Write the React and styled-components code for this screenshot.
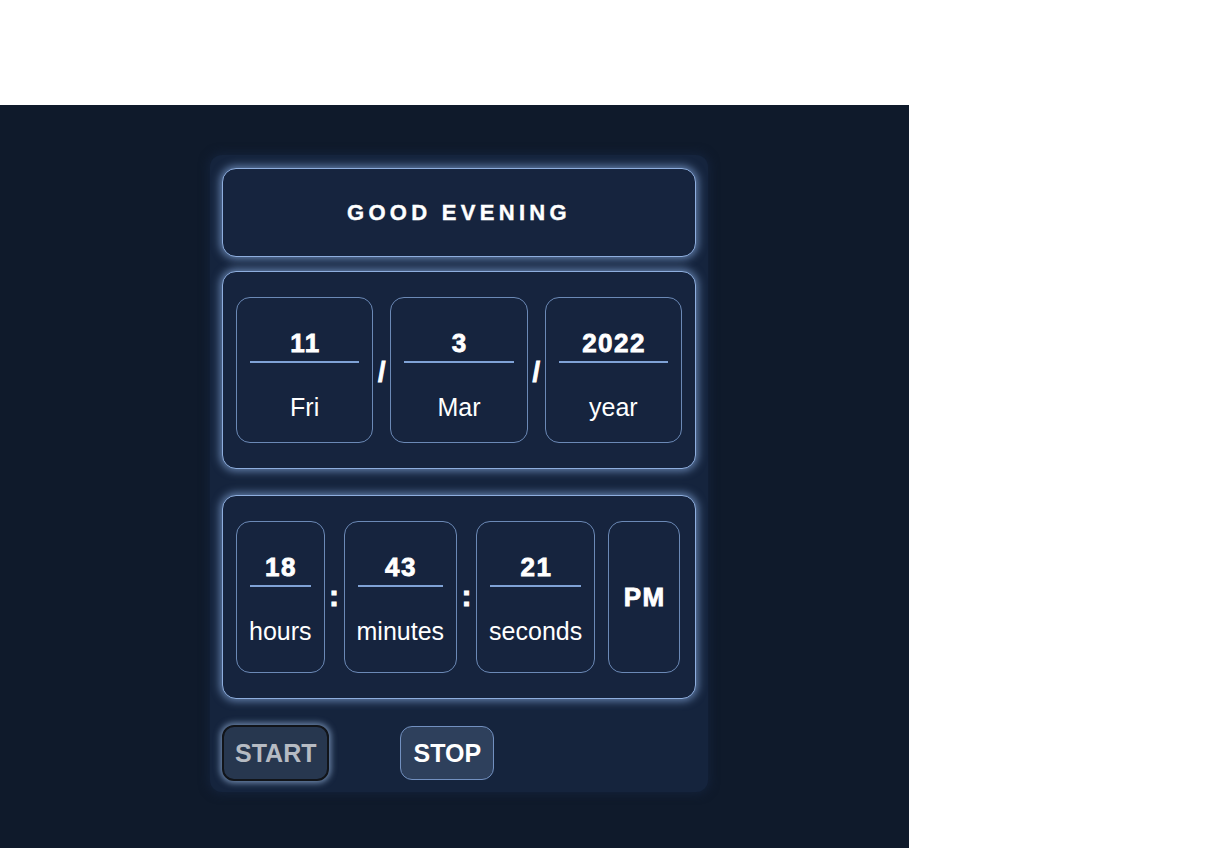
import React from 'react';
import styled, { createGlobalStyle } from 'styled-components';

const GlobalStyle = createGlobalStyle`
    body {
        margin: 0;
        background: #ffffff;
        font-family: "Liberation Sans", Arial, sans-serif;
    }
`

const Page = styled.div`
    padding-top: 105px;
`

const Stage = styled.div`
    width: 909px;
    min-height: 743px;
    background: #0f1a2b;
    padding: 50px 0 0 210px;
    box-sizing: border-box;
`

const Clock = styled.div`
    width: 498px;
    box-sizing: border-box;
    padding: 13px 12px 11px;
    background: #15243d;
    border-radius: 12px;
    box-shadow: 0 0 10px 2px #14223a;
`

const Panel = styled.div`
    background: #16243e;
    border: 1px solid #8eaede;
    border-radius: 14px;
    box-shadow: 0 0 9px 2px rgba(128, 162, 212, 0.75);
    margin-bottom: ${props => props.gap || 26}px;
`

const Greeting = styled(Panel)`
    padding: 31px 0;
    text-align: center;
    color: #ffffff;
    font-size: 22px;
    line-height: 25px;
    font-weight: bold;
    letter-spacing: 4.3px;
    -webkit-text-stroke: 0.4px #ffffff;
`

const Row = styled(Panel)`
    display: flex;
    align-items: center;
    justify-content: ${props => props.spread ? 'space-between' : 'flex-start'};
    padding: 25px 13px;
`

const Cell = styled.div`
    flex: ${props => props.grow ? 1 : 'none'};
    align-self: stretch;
    display: flex;
    flex-direction: column;
    align-items: center;
    justify-content: ${props => props.center ? 'center' : 'flex-start'};
    border: 1px solid #6b89b6;
    border-radius: 14px;
    padding: ${props => props.center ? '0 13px' : `30px 12px ${props.bottom || 20}px`};
    margin-left: ${props => props.offset || 0}px;
    color: #ffffff;
`

const Value = styled.div`
    align-self: stretch;
    text-align: center;
    font-size: 26px;
    line-height: 30px;
    font-weight: 900;
    letter-spacing: 1.5px;
    text-indent: 1.5px;
    -webkit-text-stroke: 0.8px #ffffff;
    padding-bottom: ${props => props.plain ? 0 : 3}px;
    border-bottom: ${props => props.plain ? 'none' : '2px solid #7fa2d6'};
    margin: ${props => props.plain ? '0' : '0 1px'};
`

const Label = styled.div`
    margin-top: 30px;
    font-size: 25px;
    line-height: 29px;
    white-space: nowrap;
`

const Sep = styled.div`
    width: ${props => props.wide ? 19 : 17}px;
    flex: none;
    text-align: center;
    color: #ffffff;
    font-size: ${props => props.wide ? 30 : 27}px;
    font-weight: 900;
    line-height: 30px;
    -webkit-text-stroke: 0.9px #ffffff;
    margin-top: ${props => props.drop || 0}px;
`

const Buttons = styled.div`
    display: flex;
    align-items: center;
    gap: 70px;
`

const Button = styled.button`
    font-family: "Liberation Sans", Arial, sans-serif;
    font-size: 25px;
    font-weight: bold;
    line-height: 28px;
    border-radius: 12px;
    cursor: pointer;
    ${props => props.active ? `
        padding: 12px 11px;
        color: #b6bbc3;
        background: #27374f;
        border: 2px solid #111419;
        box-shadow: 0 0 6px 2px rgba(150, 180, 220, 0.7);
    ` : `
        padding: 12px 12px;
        margin-left: 1px;
        color: #ffffff;
        background: #2e405c;
        border: 1px solid #7290c0;
    `}
`

const date = [
    { value: '11', label: 'Fri' },
    { value: '3', label: 'Mar' },
    { value: '2022', label: 'year' },
]

const time = [
    { value: '18', label: 'hours' },
    { value: '43', label: 'minutes' },
    { value: '21', label: 'seconds' },
]

const App = () => {
    return(
        <Page>
            <GlobalStyle />
            <Stage>
                <Clock>
                    <Greeting gap={14}>GOOD EVENING</Greeting>

                    <Row spread>
                        {date.map((d, i) => (
                            <React.Fragment key={d.label}>
                                {i > 0 && <Sep drop={3}>/</Sep>}
                                <Cell grow>
                                    <Value>{d.value}</Value>
                                    <Label>{d.label}</Label>
                                </Cell>
                            </React.Fragment>
                        ))}
                    </Row>

                    <Row>
                        {time.map((t, i) => (
                            <React.Fragment key={t.label}>
                                {i > 0 && <Sep wide drop={-2}>:</Sep>}
                                <Cell bottom={26}>
                                    <Value>{t.value}</Value>
                                    <Label>{t.label}</Label>
                                </Cell>
                            </React.Fragment>
                        ))}
                        <Cell center offset={13}>
                            <Value plain>PM</Value>
                        </Cell>
                    </Row>

                    <Buttons>
                        <Button active>START</Button>
                        <Button>STOP</Button>
                    </Buttons>
                </Clock>
            </Stage>
        </Page>
    )
}

export default App;
